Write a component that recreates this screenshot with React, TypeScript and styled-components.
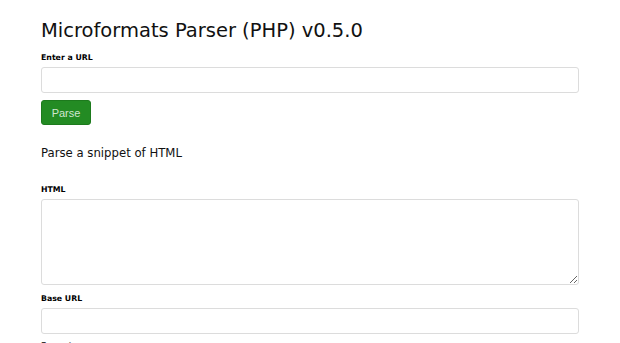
import styled, { createGlobalStyle } from "styled-components";

const Global = createGlobalStyle`
  html, body {
    margin: 0;
    padding: 0;
    background: #fff;
  }
  body {
    font-family: "DejaVu Sans", Verdana, sans-serif;
    color: #111;
  }
`;

const Page = styled.div`
  width: 538px;
  padding: 16px 0 0 41px;
`;

const Title = styled.h1`
  margin: 0 0 7px;
  font-size: 19.5px;
  font-weight: normal;
  line-height: 30px;
`;

const SubTitle = styled.h2`
  margin: 20px 0 24px;
  font-size: 11.7px;
  font-weight: normal;
  line-height: 16px;
`;

const Label = styled.label`
  display: block;
  font-size: 7.8px;
  font-weight: bold;
  line-height: 10px;
  margin-bottom: 4px;
  color: #000;
`;

const Field = styled.div<{ $gap?: number }>`
  margin-bottom: ${(p) => p.$gap ?? 7}px;
`;

const TextInput = styled.input`
  display: block;
  box-sizing: border-box;
  width: 100%;
  height: 26px;
  margin: 0;
  border: 1px solid #dcdcdc;
  border-radius: 3px;
  background: #fff;
`;

const TextArea = styled.textarea`
  display: block;
  box-sizing: border-box;
  width: 100%;
  height: 86px;
  margin: 0;
  border: 1px solid #dcdcdc;
  border-radius: 3px;
  background: #fff;
`;

const Button = styled.button`
  display: block;
  width: 50px;
  height: 25px;
  padding: 0;
  border: 1px solid #1d7a1d;
  border-radius: 3px;
  background: #238b23;
  color: #cfe6cf;
  font-family: "Liberation Sans", Arial, sans-serif;
  font-size: 11px;
`;

export default function App() {
  return (
    <>
      <Global />
      <Page>
        <Title>Microformats Parser (PHP) v0.5.0</Title>
        <Field>
          <Label>Enter a URL</Label>
          <TextInput type="text" />
        </Field>
        <Button>Parse</Button>
        <SubTitle>Parse a snippet of HTML</SubTitle>
        <Field $gap={9}>
          <Label>HTML</Label>
          <TextArea />
        </Field>
        <Field>
          <Label>Base URL</Label>
          <TextInput type="text" />
        </Field>
        <Label>Format</Label>
      </Page>
    </>
  );
}
